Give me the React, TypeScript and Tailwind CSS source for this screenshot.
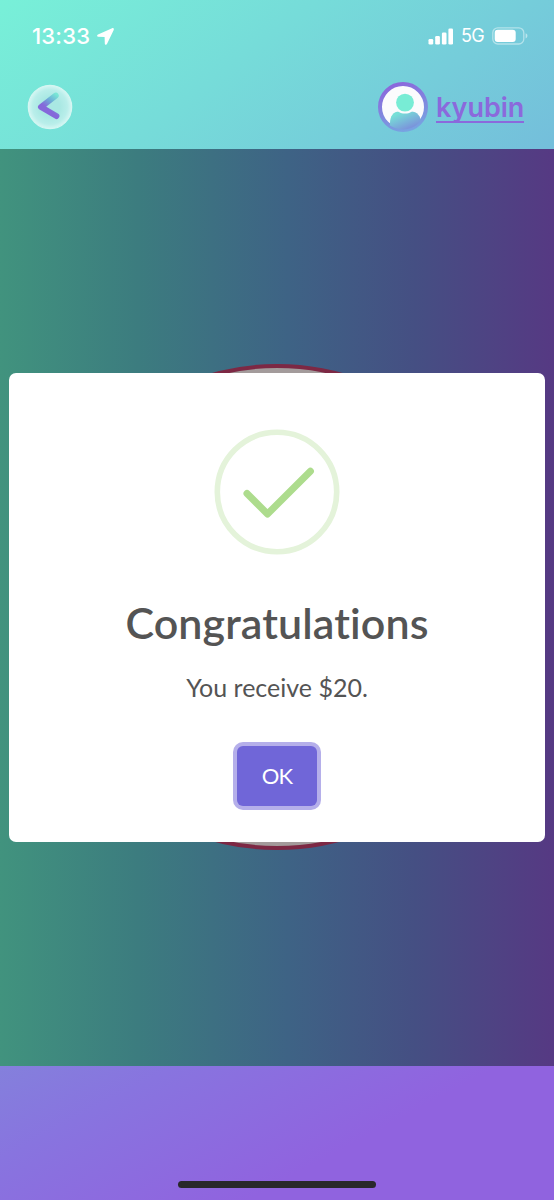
function StatusBar() {
  return (
    <div className="flex h-[72px] items-center justify-between pl-8 pr-[26px] text-white">
      <div className="flex items-center gap-1.5">
        <span className="w-[59px] whitespace-nowrap font-['Inter',sans-serif] text-[22px] font-medium leading-none tracking-[0.2px]">
          13:33
        </span>
        <svg width="17" height="17" viewBox="0 0 17 17" fill="currentColor">
          <path d="M15.1.2 1 6.5C-.3 7.2-.1 8.6 1.2 8.7l6.400.2.2 6.500c0 1.500 1.600 1.800 2.300.4L16.700 1.900c.5-1.100-.4-2.200-1.600-1.700Z" />
        </svg>
      </div>
      <div className="flex items-center">
        <svg width="25" height="17" viewBox="0 0 25 17" fill="currentColor">
          <rect x="0.5" y="11" width="4.7" height="5.5" rx="1.3" />
          <rect x="7.2" y="8" width="4.7" height="8.5" rx="1.3" />
          <rect x="13.9" y="4.5" width="4.6" height="12" rx="1.3" />
          <rect x="20.4" y="0.5" width="4.6" height="16" rx="1.3" />
        </svg>
        <span className="ml-2 w-6 whitespace-nowrap font-['Inter',sans-serif] text-[18px] font-normal leading-none tracking-[-0.8px]">
          5G
        </span>
        <svg className="ml-[7px]" width="36" height="18" viewBox="0 0 36 18" fill="none">
          <rect x="0.8" y="0.8" width="31" height="16.2" rx="5" stroke="white" strokeOpacity="0.45" strokeWidth="1.3" />
          <rect x="2.7" y="2.8" width="21" height="12.2" rx="3" fill="white" />
          <path d="M33.6 6.2v5.2c1.3-.5 1.8-1.5 1.8-2.6s-.5-2.1-1.8-2.6Z" fill="white" fillOpacity="0.5" />
        </svg>
      </div>
    </div>
  );
}

function BackIcon() {
  return (
    <svg width="46" height="46" viewBox="0 0 46 46" fill="none">
      <defs>
        <radialGradient id="glass">
          <stop offset="0.45" stopColor="#a9e8e3" />
          <stop offset="0.8" stopColor="#b9eeea" />
          <stop offset="1" stopColor="#d5f6f3" />
        </radialGradient>
        <linearGradient id="chevron" x1="30" y1="11" x2="20" y2="24" gradientUnits="userSpaceOnUse">
          <stop stopColor="#78e6d5" />
          <stop offset="0.5" stopColor="#6daed7" />
          <stop offset="1" stopColor="#8568da" />
        </linearGradient>
      </defs>
      <circle cx="23" cy="23" r="21.7" fill="url(#glass)" stroke="#d5f6f2" strokeWidth="1.2" />
      <path d="M28.700 11.600 14 23l15.400 9" stroke="url(#chevron)" strokeWidth="6" strokeLinecap="round" strokeLinejoin="round" />
    </svg>
  );
}

function Avatar() {
  return (
    <svg width="50" height="50" viewBox="0 0 50 50" fill="none">
      <defs>
        <linearGradient id="ring" x1="18" y1="2" x2="34" y2="48" gradientUnits="userSpaceOnUse">
          <stop stopColor="#8b68dc" />
          <stop offset="1" stopColor="#77a4e1" />
        </linearGradient>
        <linearGradient id="body" x1="22" y1="31" x2="30" y2="50" gradientUnits="userSpaceOnUse">
          <stop stopColor="#77dfd7" />
          <stop offset="1" stopColor="#7b87dc" />
        </linearGradient>
        <clipPath id="face">
          <circle cx="25" cy="25" r="22.500" />
        </clipPath>
      </defs>
      <circle cx="25" cy="25" r="23" fill="#fbfbfd" stroke="url(#ring)" strokeWidth="4" />
      <path d="M12 50V41c0-6.800 3.500-11.500 9-11.500h12c6 0 10 4.700 10 11.500v9Z" fill="url(#body)" clipPath="url(#face)" />
      <circle cx="27" cy="20.600" r="11" fill="#fbfbfd" />
      <circle cx="27" cy="20.600" r="8.900" fill="#78ecd5" />
    </svg>
  );
}

function SuccessIcon() {
  return (
    <svg width="126" height="126" viewBox="0 0 126 126" fill="none">
      <circle cx="63" cy="63" r="59.700" stroke="#e4f3da" strokeWidth="5.600" />
      <path d="m33 64.500 20.500 20.500L96.400 42.300" stroke="#addc8d" strokeWidth="7" strokeLinecap="round" strokeLinejoin="round" />
    </svg>
  );
}

function ResultDialog() {
  return (
    <div className="z-10 col-start-1 row-start-1 flex h-[469px] w-[536px] flex-col items-center rounded-[7px] bg-white pt-14 text-[#545454]">
      <SuccessIcon />
      <h2 className="mt-[42px] whitespace-nowrap font-['Lato',sans-serif] text-[43px] font-semibold leading-[52px] tracking-[0.1px]">
        Congratulations
      </h2>
      <p className="mt-[22px] whitespace-nowrap font-['Lato',sans-serif] text-[25px] leading-8">
        You receive $20.
      </p>
      <button className="mt-[43px] h-[60px] w-20 rounded-[6px] bg-[#7066d8] font-['Lato',sans-serif] text-[22px] tracking-[-0.8px] text-white shadow-[0_0_0_4px_#b5afea]">
        OK
      </button>
    </div>
  );
}

export default function App() {
  return (
    <div className="flex h-[1200px] w-[554px] flex-col overflow-hidden">
      <header className="h-[148.5px] shrink-0 bg-[linear-gradient(143deg,#78f0d8_0%,#76dcd9_42%,#74bedb_100%)]">
        <StatusBar />
        <div className="flex h-[70px] items-center justify-between pl-[27px] pr-[30px]">
          <button aria-label="Back">
            <BackIcon />
          </button>
          <a className="flex items-center gap-2">
            <Avatar />
            <span className="h-[31px] w-[88px] whitespace-nowrap border-b-2 border-[#8b69dc] font-['Inter',sans-serif] text-[27px] font-semibold leading-[32px] text-[#8b69dc]">
              kyubin
            </span>
          </a>
        </div>
      </header>
      <main className="grid h-[917px] shrink-0 place-items-center bg-[linear-gradient(90deg,#41937e_0%,#3c7c7f_25%,#3e6385_52%,#454f83_75%,#563983_100%)]">
        <div className="col-start-1 row-start-1 h-[486px] w-[486px] rounded-full border-[4.5px] border-[#7d2844] bg-[#a39b9b]" />
        <ResultDialog />
      </main>
      <footer className="flex grow items-end justify-center bg-[linear-gradient(152deg,#8480dc_0%,#8874df_22%,#9063df_62%)] pb-3">
        <div className="h-[7px] w-[198px] rounded-full bg-[#29282b]" />
      </footer>
    </div>
  );
}
